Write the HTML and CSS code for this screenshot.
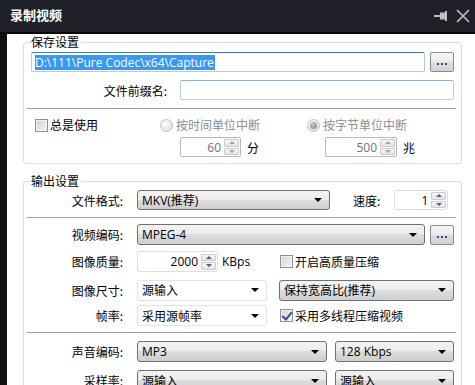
FILE: index.html
```html
<!DOCTYPE html>
<html lang="zh-CN">
<head>
    <meta charset="utf-8">
    <title>录制视频</title>
    <link rel="stylesheet" href="styles.css">
</head>
<body>
    <div class="window">
        <div class="titlebar">
            <span class="title">录制视频</span>
            <div class="title-tools">
                <svg class="pin" width="14" height="10" viewBox="0 0 14 10">
                    <rect x="0" y="4" width="6" height="2" fill="#bdbdbd"/>
                    <rect x="6" y="1.5" width="5" height="7" fill="#bdbdbd"/>
                    <rect x="11" y="0" width="2" height="10" fill="#bdbdbd"/>
                </svg>
                <svg class="close" width="14" height="14" viewBox="0 0 14 14">
                    <path d="M1 1 L13 13 M13 1 L1 13" stroke="#c6c6c6" stroke-width="1.6" fill="none"/>
                </svg>
            </div>
        </div>

        <div class="client">
            <!-- 保存设置 -->
            <fieldset class="group">
                <legend>保存设置</legend>
                <div class="row row-path">
                    <div class="textbox textbox-focus"><span class="selected">D:\111\Pure Codec\x64\Capture</span></div>
                    <button class="btn-more"><i></i><i></i><i></i></button>
                </div>
                <div class="row row-prefix">
                    <span class="lbl lbl-wide">文件前缀名:</span>
                    <div class="textbox textbox-light"></div>
                </div>
                <div class="sep"></div>
                <div class="split">
                    <label class="check"><span class="box"></span>总是使用</label>
                    <label class="radio disabled"><span class="dot"></span>按时间单位中断</label>
                    <label class="radio disabled checked"><span class="dot"></span>按字节单位中断</label>

                    <div></div>
                    <div class="spin-wrap spin-wrap-time">
                        <div class="spin spin-disabled spin-60">
                            <span class="spin-value">60</span>
                            <span class="spin-btns"><span class="up"></span><span class="down"></span></span>
                        </div>
                        <span class="unit">分</span>
                    </div>
                    <div class="spin-wrap spin-wrap-size">
                        <div class="spin spin-disabled spin-500">
                            <span class="spin-value">500</span>
                            <span class="spin-btns"><span class="up"></span><span class="down"></span></span>
                        </div>
                        <span class="unit">兆</span>
                    </div>
                </div>
            </fieldset>

            <!-- 输出设置 -->
            <fieldset class="group group-output">
                <legend>输出设置</legend>
                <div class="row row-format">
                    <span class="lbl">文件格式:</span>
                    <div class="combo combo-format"><span class="value">MKV(推荐)</span><span class="arrow"></span></div>
                    <span class="lbl-speed">速度:</span>
                    <div class="spin spin-speed">
                        <span class="spin-value">1</span>
                        <span class="spin-btns"><span class="up"></span><span class="down"></span></span>
                    </div>
                </div>
                <div class="sep sep-output"></div>
                <div class="row row-video">
                    <span class="lbl">视频编码:</span>
                    <div class="combo combo-codec"><span class="value">MPEG-4</span><span class="arrow"></span></div>
                    <button class="btn-more"><i></i><i></i><i></i></button>
                </div>
                <div class="row row-quality">
                    <span class="lbl">图像质量:</span>
                    <div class="spin spin-quality">
                        <span class="spin-value">2000</span>
                        <span class="spin-btns"><span class="up"></span><span class="down"></span></span>
                    </div>
                    <span class="unit-kbps">KBps</span>
                    <label class="check"><span class="box"></span>开启高质量压缩</label>
                </div>
                <div class="row row-size">
                    <span class="lbl">图像尺寸:</span>
                    <div class="combo combo-flat"><span class="value">源输入</span><span class="arrow"></span></div>
                    <div class="combo combo-aspect"><span class="value">保持宽高比(推荐)</span><span class="arrow"></span></div>
                </div>
                <div class="row row-fps">
                    <span class="lbl">帧率:</span>
                    <div class="combo combo-flat"><span class="value">采用源帧率</span><span class="arrow"></span></div>
                    <label class="check checked"><span class="box"></span>采用多线程压缩视频</label>
                </div>
                <div class="sep sep-audio"></div>
                <div class="row row-audio">
                    <span class="lbl">声音编码:</span>
                    <div class="combo combo-audio"><span class="value">MP3</span><span class="arrow"></span></div>
                    <div class="combo combo-bitrate"><span class="value">128 Kbps</span><span class="arrow"></span></div>
                </div>
                <div class="row row-audio">
                    <span class="lbl">采样率:</span>
                    <div class="combo combo-audio"><span class="value">源输入</span><span class="arrow"></span></div>
                    <div class="combo combo-bitrate"><span class="value">源输入</span><span class="arrow"></span></div>
                </div>
            </fieldset>
        </div>
    </div>
</body>
</html>
```

FILE: styles.css
```css
* {
    margin: 0;
    padding: 0;
    box-sizing: border-box;
}

body {
    font-family: "Open Sans", "Noto Sans CJK SC", sans-serif;
    font-size: 12px;
    color: #000;
    background: #fff;
    width: 475px;
    height: 385px;
    overflow: hidden;
}

.window {
    display: flex;
    flex-direction: column;
    height: 385px;
}

/* 标题栏 */
.titlebar {
    height: 34px;
    flex-shrink: 0;
    background: #1f2028;
    border-bottom: 2px solid #050505;
    display: flex;
    align-items: center;
    justify-content: space-between;
    padding: 0 5px 0 10px;
}

.title {
    color: #fff;
    font-family: "Noto Sans CJK SC", sans-serif;
    font-weight: 700;
    font-size: 13px;
    line-height: 16px;
    margin-top: -2px;
}

.title-tools {
    display: flex;
    align-items: center;
    gap: 8px;
    margin-top: -1px;
}

.client {
    flex: 1;
    border-left: 7px solid #111;
    padding: 0 13px 0 16px;
    overflow: hidden;
}

/* 分组框 */
.group {
    border: 1px solid #d5dfe5;
    border-radius: 3px;
    padding: 2px 7px 6px 7px;
}

.group legend {
    padding: 0 2px 0 0;
    line-height: 16px;
    font-family: "Noto Sans CJK SC", sans-serif;
}

.group-output {
    margin-top: 9px;
    padding-top: 1px;
    border-bottom: none;
    border-bottom-left-radius: 0;
    border-bottom-right-radius: 0;
}

.row {
    display: flex;
    align-items: center;
    height: 21px;
}

.sep {
    height: 1px;
    background: #a0a0a0;
    margin: 8px -2px 0 -4px;
}

.lbl {
    width: 92px;
    margin-right: 14px;
    text-align: right;
    font-family: "Noto Sans CJK SC", sans-serif;
    flex-shrink: 0;
}

.lbl-wide {
    width: 136px;
    margin-right: 13px;
}

/* 文本框 */
.textbox {
    flex: 1;
    height: 20px;
    border: 1px solid #b3cfe6;
    border-radius: 2px;
    display: flex;
    align-items: center;
    padding-left: 3px;
    background: #fff;
}

.textbox-focus {
    border-color: #a9d0e8;
    border-top-color: #3d7cb0;
}

.textbox-light {
    border-top-color: #8db2d4;
}

.selected {
    background: #3399ff;
    color: #fff;
    line-height: 15px;
    padding-right: 1px;
}

.btn-more {
    width: 24px;
    height: 20px;
    margin-left: 5px;
    border: 1px solid #8a8a8a;
    border-radius: 2px;
    background: linear-gradient(#f6f6f6, #e9e9e9 50%, #dddddd 50%, #d3d3d3);
    display: flex;
    align-items: flex-end;
    justify-content: center;
    gap: 2px;
    padding-bottom: 6px;
    flex-shrink: 0;
}

.btn-more i {
    width: 2px;
    height: 2px;
    background: #2c4a8c;
}

.row-path {
    height: 20px;
}

.row-prefix {
    height: 20px;
    margin-top: 8px;
}

/* 复选框 / 单选框 */
.check, .radio {
    display: flex;
    align-items: center;
    font-family: "Noto Sans CJK SC", sans-serif;
    line-height: 16px;
}

.check .box {
    width: 13px;
    height: 13px;
    border: 1px solid #8e8f8f;
    background: linear-gradient(135deg, #d2d2d2, #f6f6f6);
    box-shadow: inset 0 0 0 1px #f4f4f4;
    margin-right: 2px;
    position: relative;
}

.check.checked .box::after {
    content: "";
    position: absolute;
    left: 3px;
    top: 0;
    width: 4px;
    height: 8px;
    border-right: 2px solid #2b50a0;
    border-bottom: 2px solid #2b50a0;
    transform: rotate(40deg);
}

.radio .dot {
    width: 13px;
    height: 13px;
    border-radius: 50%;
    border: 1px solid #c2c2c2;
    background: radial-gradient(circle at 40% 35%, #ffffff, #d6d6d6);
    margin-right: 3px;
    position: relative;
}

.radio.checked .dot::after {
    content: "";
    position: absolute;
    left: 2px;
    top: 2px;
    width: 7px;
    height: 7px;
    border-radius: 50%;
    background: radial-gradient(circle at 40% 35%, #c9c9c9, #7d7d7d);
}

.radio.disabled {
    color: #8d8d8d;
}

.split {
    display: grid;
    grid-template-columns: 129px 147px 1fr;
    grid-template-rows: 16px 20px;
    row-gap: 4px;
    align-items: center;
    margin-top: 8px;
}

.split .check {
    margin-left: 4px;
}

.spin-wrap {
    display: flex;
    align-items: center;
}

.spin-wrap-time {
    margin-left: 20px;
}

.spin-wrap-size {
    margin-left: 18px;
}

.unit {
    margin-left: 6px;
    font-family: "Noto Sans CJK SC", sans-serif;
}

/* 数值框 */
.spin {
    height: 20px;
    border: 1px solid #c6c6c6;
    border-radius: 2px;
    background: #fff;
    display: flex;
    align-items: center;
    padding: 1px;
}

.spin-value {
    flex: 1;
    text-align: right;
    padding-right: 3px;
}

.spin-btns {
    width: 15px;
    height: 16px;
    display: flex;
    flex-direction: column;
    gap: 1px;
}

.spin-btns span {
    flex: 1;
    border: 1px solid #c9cbd0;
    border-radius: 1px;
    background: linear-gradient(#f7f7f7, #e4e4e4);
    display: flex;
    align-items: center;
    justify-content: center;
}

.spin-btns .up::after,
.spin-btns .down::after {
    content: "";
    border-left: 3px solid transparent;
    border-right: 3px solid transparent;
}

.spin-btns .up::after {
    border-bottom: 3px solid #4a5f86;
}

.spin-btns .down::after {
    border-top: 3px solid #4a5f86;
}

.spin-disabled {
    border-color: #b8b8b8;
}

.spin-disabled .spin-value {
    color: #6f6f6f;
}

.spin-disabled .up::after {
    border-bottom-color: #a8a8a8;
}

.spin-disabled .down::after {
    border-top-color: #a8a8a8;
}

.spin-60 {
    width: 61px;
}

.spin-500 {
    width: 72px;
}

.spin-speed {
    width: 54px;
    margin-left: 14px;
    border-color: #dadfe4;
}

.spin-quality {
    width: 81px;
    height: 21px;
    border-color: #dadfe4;
}

/* 下拉框 */
.combo {
    height: 21px;
    display: flex;
    align-items: center;
    border: 1px solid #707070;
    border-radius: 3px;
    background: linear-gradient(#f3f3f3, #ebebeb 50%, #dddddd 50%, #cfcfcf);
    padding: 0 7px 0 4px;
    flex-shrink: 0;
}

.combo .value {
    flex: 1;
    white-space: nowrap;
}

.combo .arrow {
    border-left: 4px solid transparent;
    border-right: 4px solid transparent;
    border-top: 4px solid #000;
}

.combo-flat {
    width: 130px;
    background: #fff;
    border-color: #dfe4e9;
    border-radius: 2px;
}

.combo-format {
    width: 193px;
    height: 20px;
}

.lbl-speed {
    margin-left: 23px;
    font-family: "Noto Sans CJK SC", sans-serif;
}

.combo-codec {
    flex: 1;
}

.combo-aspect {
    width: 175px;
    margin-left: 12px;
}

.combo-audio {
    width: 190px;
}

.combo-bitrate {
    width: 119px;
    margin-left: 8px;
}

.unit-kbps {
    margin-left: 4px;
    width: 58px;
}

.row-format {
    height: 20px;
}

.sep-output {
    margin-top: 7px;
}

.row-video {
    margin-top: 6px;
}

.row-quality {
    margin-top: 6px;
}

.row-size {
    height: 20px;
    margin-top: 8px;
}

.row-fps {
    margin-top: 5px;
}

.row-fps .check {
    margin-left: 13px;
}

.sep-audio {
    margin-top: 6px;
}

.row-audio {
    margin-top: 8px;
}
```
